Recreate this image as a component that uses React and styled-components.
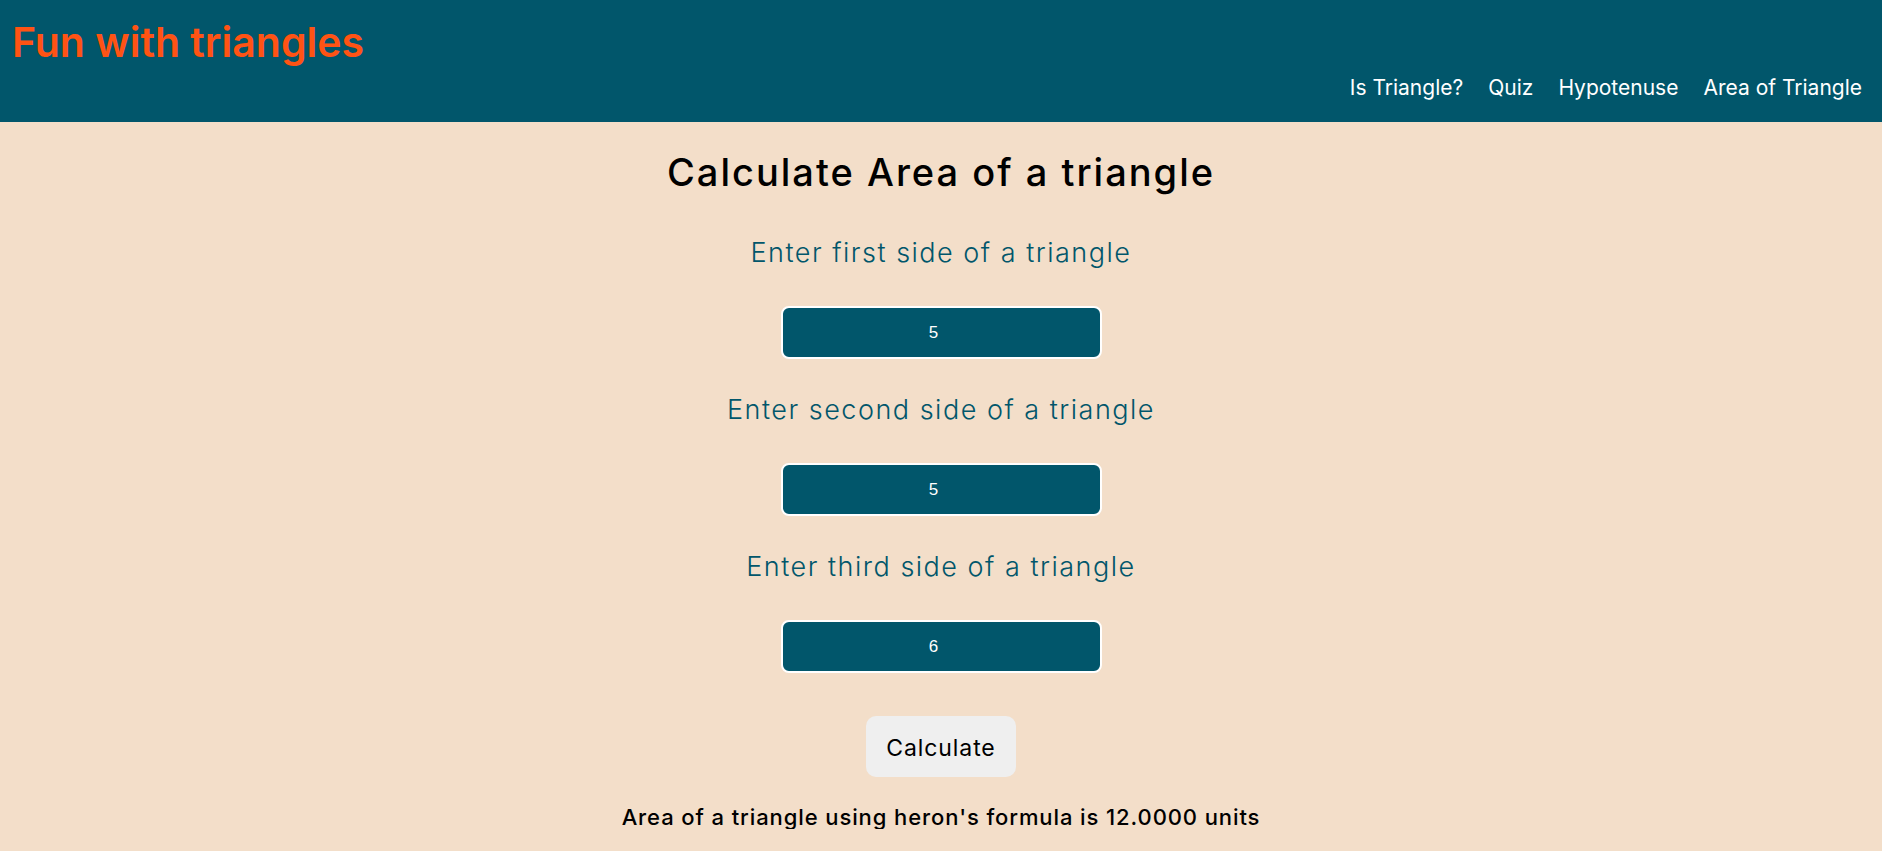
import styled, { createGlobalStyle } from "styled-components";

const GlobalStyle = createGlobalStyle`
  body {
    margin: 0;
    background: #f3dec9;
    font-family: "Inter", "Open Sans", sans-serif;
  }
`;

const Header = styled.header`
  height: 122px;
  background: #01566b;
  display: flex;
  flex-direction: column;
  box-sizing: border-box;
  padding: 18px 20px 0 12px;
`;

const Brand = styled.h1`
  margin: 0;
  color: #ff5314;
  font-size: 41px;
  font-weight: 600;
  line-height: 48px;
`;

const Nav = styled.nav`
  display: flex;
  justify-content: flex-end;
  gap: 25px;
  margin-top: 10px;
`;

const NavLink = styled.a`
  color: #ffffff;
  font-size: 21px;
  line-height: 24px;
  text-decoration: none;
  cursor: pointer;
`;

const Main = styled.main`
  display: flex;
  flex-direction: column;
  align-items: center;
  padding-top: 30px;
`;

const Title = styled.h2`
  margin: 0 0 46px;
  font-size: 38px;
  font-weight: 500;
  letter-spacing: 2px;
  line-height: 40px;
  color: #000;
`;

const Label = styled.label`
  color: #01566b;
  font-size: 27px;
  font-weight: 300;
  letter-spacing: 1.5px;
  line-height: 30px;
  margin-bottom: 38px;
`;

const Input = styled.input`
  width: 321px;
  height: 53px;
  box-sizing: border-box;
  background: #01566b;
  border: 2px solid #ffffff;
  border-radius: 8px;
  color: #ffffff;
  font-family: "Liberation Sans", Arial, sans-serif;
  font-size: 17px;
  text-align: center;
  margin-bottom: ${(p) => (p.$last ? "43px" : "36px")};
  outline: none;
`;

const Button = styled.button`
  width: 150px;
  height: 61px;
  padding-top: 3px;
  border: none;
  border-radius: 10px;
  background: #efefef;
  color: #000;
  font-family: inherit;
  font-size: 23px;
  letter-spacing: 0.9px;
  cursor: pointer;
  margin-bottom: 28px;
`;

const Result = styled.p`
  margin: 0;
  font-size: 22px;
  font-weight: 500;
  letter-spacing: 0.9px;
  line-height: 24px;
  color: #000;
`;

const sides = [
  { label: "Enter first side of a triangle", value: "5" },
  { label: "Enter second side of a triangle", value: "5" },
  { label: "Enter third side of a triangle", value: "6" },
];

const App = () => {
  return (
    <>
      <GlobalStyle />
      <Header>
        <Brand>Fun with triangles</Brand>
        <Nav>
          <NavLink>Is Triangle?</NavLink>
          <NavLink>Quiz</NavLink>
          <NavLink>Hypotenuse</NavLink>
          <NavLink>Area of Triangle</NavLink>
        </Nav>
      </Header>
      <Main>
        <Title>Calculate Area of a triangle</Title>
        {sides.map((s, i) => (
          <>
            <Label key={"l" + i}>{s.label}</Label>
            <Input
              key={"i" + i}
              type="number"
              defaultValue={s.value}
              $last={i === sides.length - 1}
            />
          </>
        ))}
        <Button>Calculate</Button>
        <Result>Area of a triangle using heron's formula is 12.0000 units</Result>
      </Main>
    </>
  );
};

export default App;
